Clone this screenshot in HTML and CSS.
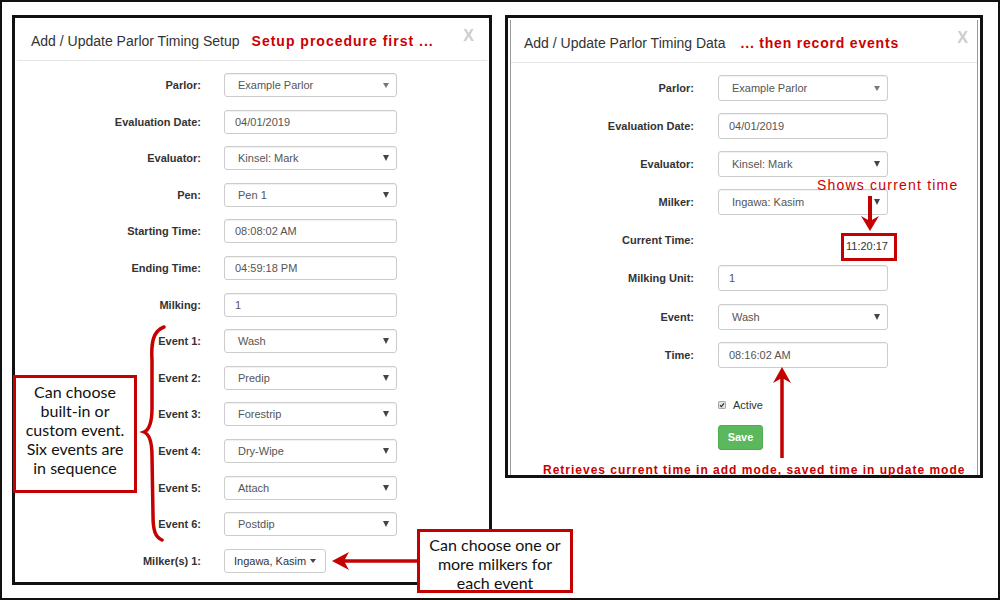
FILE: index.html
```html
<!DOCTYPE html>
<html>
<head>
<meta charset="utf-8">
<link rel="stylesheet" href="styles.css">
</head>
<body>
<div class="frame">
  <div class="panel panel-left">
    <div class="header">
      <span class="title">Add / Update Parlor Timing Setup</span>
      <span class="note-head">Setup procedure first ...</span>
      <span class="close">X</span>
    </div>
    <div class="body body-left">
      <div class="form form-left">
        <label>Parlor:</label><div class="ctl select"><span>Example Parlor</span><i class="caret light"></i></div>
        <label>Evaluation Date:</label><div class="ctl input">04/01/2019</div>
        <label>Evaluator:</label><div class="ctl select"><span>Kinsel: Mark</span><i class="caret"></i></div>
        <label>Pen:</label><div class="ctl select"><span>Pen 1</span><i class="caret"></i></div>
        <label>Starting Time:</label><div class="ctl input">08:08:02 AM</div>
        <label>Ending Time:</label><div class="ctl input">04:59:18 PM</div>
        <label>Milking:</label><div class="ctl input">1</div>
        <label>Event 1:</label><div class="ctl select"><span>Wash</span><i class="caret"></i></div>
        <label>Event 2:</label><div class="ctl select"><span>Predip</span><i class="caret"></i></div>
        <label>Event 3:</label><div class="ctl select"><span>Forestrip</span><i class="caret"></i></div>
        <label>Event 4:</label><div class="ctl select"><span>Dry-Wipe</span><i class="caret"></i></div>
        <label>Event 5:</label><div class="ctl select"><span>Attach</span><i class="caret"></i></div>
        <label>Event 6:</label><div class="ctl select"><span>Postdip</span><i class="caret"></i></div>
        <label>Milker(s) 1:</label><div class="cell"><div class="ctl dropbtn"><span>Ingawa, Kasim</span><i class="caret small"></i></div></div>
      </div>
    </div>
  </div>
  <div class="panel panel-right">
    <div class="modal">
      <div class="header header-right">
        <span class="title">Add / Update Parlor Timing Data</span>
        <span class="note-head note-head-right">... then record events</span>
        <span class="close">X</span>
      </div>
      <div class="body body-right">
        <div class="form form-right">
          <label>Parlor:</label><div class="ctl select"><span>Example Parlor</span><i class="caret light"></i></div>
          <label>Evaluation Date:</label><div class="ctl input">04/01/2019</div>
          <label>Evaluator:</label><div class="ctl select"><span>Kinsel: Mark</span><i class="caret"></i></div>
          <label>Milker:</label><div class="ctl select"><span>Ingawa: Kasim</span><i class="caret"></i></div>
          <label>Current Time:</label><div class="cell now">11:20:17</div>
          <label>Milking Unit:</label><div class="ctl input">1</div>
          <label>Event:</label><div class="ctl select"><span>Wash</span><i class="caret"></i></div>
          <label>Time:</label><div class="ctl input">08:16:02 AM</div>
        </div>
        <div class="check-row"><span class="checkbox"><svg width="6" height="6" viewBox="0 0 6 6"><path d="M1 3.2 L2.4 4.6 L5 1.4" stroke="#333" stroke-width="1.3" fill="none"/></svg></span><span>Active</span></div>
        <div class="save-row"><span class="btn-save">Save</span></div>
      </div>
    </div>
  </div>
</div>

<div class="callout callout-events">Can choose<br>built-in or<br>custom event.<br>Six events are<br>in sequence</div>
<div class="callout callout-milkers">Can choose one or<br>more milkers for<br>each event</div>
<div class="timebox"></div>
<div class="note-shows">Shows current time</div>
<div class="note-retrieves">Retrieves current time in add mode, saved time in update mode</div>

<svg class="marks" width="1000" height="600" viewBox="0 0 1000 600">
  <path d="M164 327 C153 331 151 343 152 360 L152 408 C152 424 149 430 144 432 C149 434 152 441 152 456 L153 515 C153 530 155 537 162 540" stroke="#c40000" stroke-width="3.5" fill="none" stroke-linecap="round"/>
  <line x1="417" y1="561" x2="344" y2="561" stroke="#c40000" stroke-width="3.5"/>
  <polygon points="332,561 349,552 344,561 349,570" fill="#c40000"/>
  <line x1="782" y1="458" x2="782" y2="378" stroke="#c40000" stroke-width="3.5"/>
  <polygon points="782,367 773,383 782,378 791,383" fill="#c40000"/>
  <line x1="870" y1="196" x2="870" y2="222" stroke="#c40000" stroke-width="4"/>
  <polygon points="870,231 861,216 870,221 879,216" fill="#c40000"/>
</svg>
</body>
</html>
```
FILE: styles.css
```css
html, body {
  margin: 0;
  padding: 0;
  background: #fff;
}
body {
  position: relative;
  width: 1000px;
  height: 600px;
  overflow: hidden;
  font-family: "Liberation Sans", Arial, sans-serif;
}
.frame {
  box-sizing: border-box;
  width: 1000px;
  height: 600px;
  border: 2px solid #111;
  padding: 13px 0 0 10px;
  display: flex;
  align-items: flex-start;
  gap: 13px;
}
.panel {
  box-sizing: border-box;
  border: 3px solid #111;
  background: #fff;
  display: flex;
  flex-direction: column;
}
.panel-left {
  width: 480px;
  height: 570px;
}
.panel-right {
  width: 478px;
  height: 463px;
}
.modal {
  flex: 1;
  margin: 2px 2px 0;
  border-left: 1px solid #9a9a9a;
  border-right: 1px solid #9a9a9a;
  display: flex;
  flex-direction: column;
}
.header {
  height: 43px;
  box-sizing: border-box;
  display: flex;
  align-items: center;
  padding: 3px 13px 0 14px;
  margin: 0 2px;
  border-bottom: 1px solid #e5e5e5;
}
.header-right {
  margin: 0;
  padding: 3px 9px 0 13px;
}
.title {
  font-size: 14px;
  color: #333;
}
.note-head {
  margin-left: 12px;
  font-size: 14px;
  font-weight: bold;
  color: #cc0000;
  letter-spacing: 1px;
}
.note-head-right {
  margin-left: 15px;
  letter-spacing: 0.8px;
}
.close {
  margin-left: auto;
  align-self: flex-start;
  margin-top: 6px;
  font-size: 16px;
  font-weight: bold;
  color: #cdcdcd;
}
.body-left {
  padding-top: 12px;
}
.body-right {
  padding-top: 12px;
}
.form {
  display: grid;
  align-items: center;
}
.form-left {
  grid-template-columns: 186px 173px;
  column-gap: 23px;
  row-gap: 12.6px;
  grid-auto-rows: 24px;
}
.form-right {
  grid-template-columns: 183px 170px;
  column-gap: 24px;
  row-gap: 12.1px;
  grid-auto-rows: 26px;
}
label {
  text-align: right;
  font-size: 11px;
  font-weight: bold;
  color: #333;
}
.ctl {
  box-sizing: border-box;
  height: 100%;
  border: 1px solid #ccc;
  border-radius: 3px;
  background: #fff;
  box-shadow: inset 0 1px 1px rgba(0,0,0,0.06);
  font-size: 11px;
  color: #555;
  display: flex;
  align-items: center;
  white-space: nowrap;
}
.input {
  padding-left: 10px;
}
.select {
  justify-content: space-between;
  padding: 0 7px 0 13px;
}
.caret {
  width: 0;
  height: 0;
  border-left: 3.5px solid transparent;
  border-right: 3.5px solid transparent;
  border-top: 6px solid #444;
}
.caret.light {
  border-left-width: 3px;
  border-right-width: 3px;
  border-top: 5px solid #777;
}
.caret.small {
  border-left-width: 3.5px;
  border-right-width: 3.5px;
  border-top: 4px solid #444;
  margin-left: 4px;
}
.cell {
  height: 100%;
  display: flex;
  align-items: center;
}
.dropbtn {
  width: 102px;
  padding: 0 6px 0 9px;
  box-shadow: none;
  color: #333;
}
.now {
  justify-content: flex-end;
  align-items: flex-start;
  padding-top: 13px;
  box-sizing: border-box;
  font-size: 11px;
  color: #333;
}
.check-row {
  margin-top: 31px;
  padding-left: 207px;
  height: 12px;
  display: flex;
  align-items: center;
  gap: 7px;
  font-size: 11px;
  color: #333;
}
.checkbox {
  box-sizing: border-box;
  width: 8px;
  height: 8px;
  background: #e2e2e2;
  border: 1px solid #aaa;
  border-radius: 1px;
  display: flex;
  align-items: center;
  justify-content: center;
}
.save-row {
  margin-top: 14px;
  padding-left: 207px;
  display: flex;
}
.btn-save {
  width: 45px;
  height: 25px;
  box-sizing: border-box;
  border: 1px solid #4cae4c;
  border-radius: 3px;
  background: #5cb85c;
  color: #fff;
  font-size: 11px;
  font-weight: bold;
  display: flex;
  align-items: center;
  justify-content: center;
}
.callout {
  position: absolute;
  box-sizing: border-box;
  border: 3px solid #c40000;
  background: #fff;
  color: #111;
  font-family: Lato, "Open Sans", sans-serif;
  font-size: 16px;
  line-height: 19px;
  text-align: center;
}
.callout-events {
  left: 13px;
  top: 375px;
  width: 124px;
  height: 118px;
  padding-top: 4px;
}
.callout-milkers {
  left: 417px;
  top: 529px;
  width: 156px;
  height: 64px;
  padding-top: 3px;
}
.timebox {
  position: absolute;
  left: 841px;
  top: 233px;
  width: 56px;
  height: 28px;
  box-sizing: border-box;
  border: 3px solid #c40000;
}
.note-shows {
  position: absolute;
  left: 817px;
  top: 177px;
  font-size: 14px;
  color: #cc0000;
  letter-spacing: 1.2px;
}
.note-retrieves {
  position: absolute;
  left: 543px;
  top: 463px;
  font-size: 12px;
  font-weight: bold;
  color: #cc0000;
  letter-spacing: 1px;
  white-space: nowrap;
}
.marks {
  position: absolute;
  left: 0;
  top: 0;
  pointer-events: none;
}
```
